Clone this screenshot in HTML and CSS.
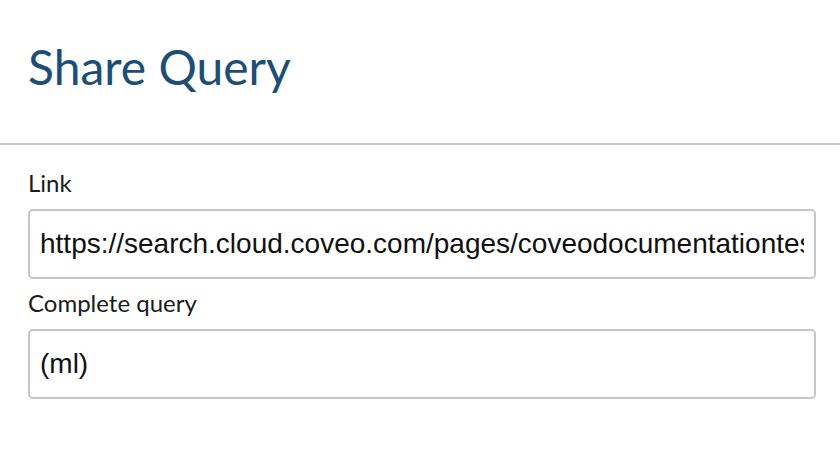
FILE: index.html
```html
<!DOCTYPE html>
<html>
<head>
<meta charset="utf-8">
<link rel="stylesheet" href="styles.css">
</head>
<body>
<div class="modal">
  <header class="modal-header">
    <h1 class="title">Share Query</h1>
  </header>
  <div class="modal-body">
    <label class="field-label">Link</label>
    <div class="field-input"><span class="field-text">https://search.cloud.coveo.com/pages/coveodocumentationtest/search#q=ml</span></div>
    <label class="field-label">Complete query</label>
    <div class="field-input"><span class="field-text">(ml)</span></div>
  </div>
</div>
</body>
</html>
```
FILE: styles.css
```css
html, body {
  margin: 0;
  padding: 0;
  background: #ffffff;
}
.modal {
  width: 840px;
  height: 452px;
  overflow: hidden;
}
.modal-header {
  height: 143px;
  border-bottom: 2px solid #c3c6cc;
  padding: 0 28px;
  display: flex;
  align-items: flex-start;
}
.title {
  margin: 0;
  padding-top: 38px;
  font-family: Lato, "Noto Sans", sans-serif;
  font-weight: 400;
  font-size: 48px;
  line-height: 58px;
  color: #1d4e76;
}
.modal-body {
  padding: 22px 24px 0 28px;
  display: flex;
  flex-direction: column;
}
.field-label {
  font-family: Lato, "Noto Sans", sans-serif;
  font-size: 24px;
  line-height: 32px;
  color: #1b1b1b;
  margin-bottom: 10px;
}
.field-input {
  height: 66px;
  border: 2px solid #c3c6cc;
  border-radius: 5px;
  display: flex;
  align-items: center;
  padding: 0 10px 0 10px;
  overflow: hidden;
  white-space: nowrap;
  margin-bottom: 8px;
}
.field-text {
  font-family: "Liberation Sans", Arial, sans-serif;
  font-size: 28px;
  color: #111111;
  overflow: hidden;
}
```
